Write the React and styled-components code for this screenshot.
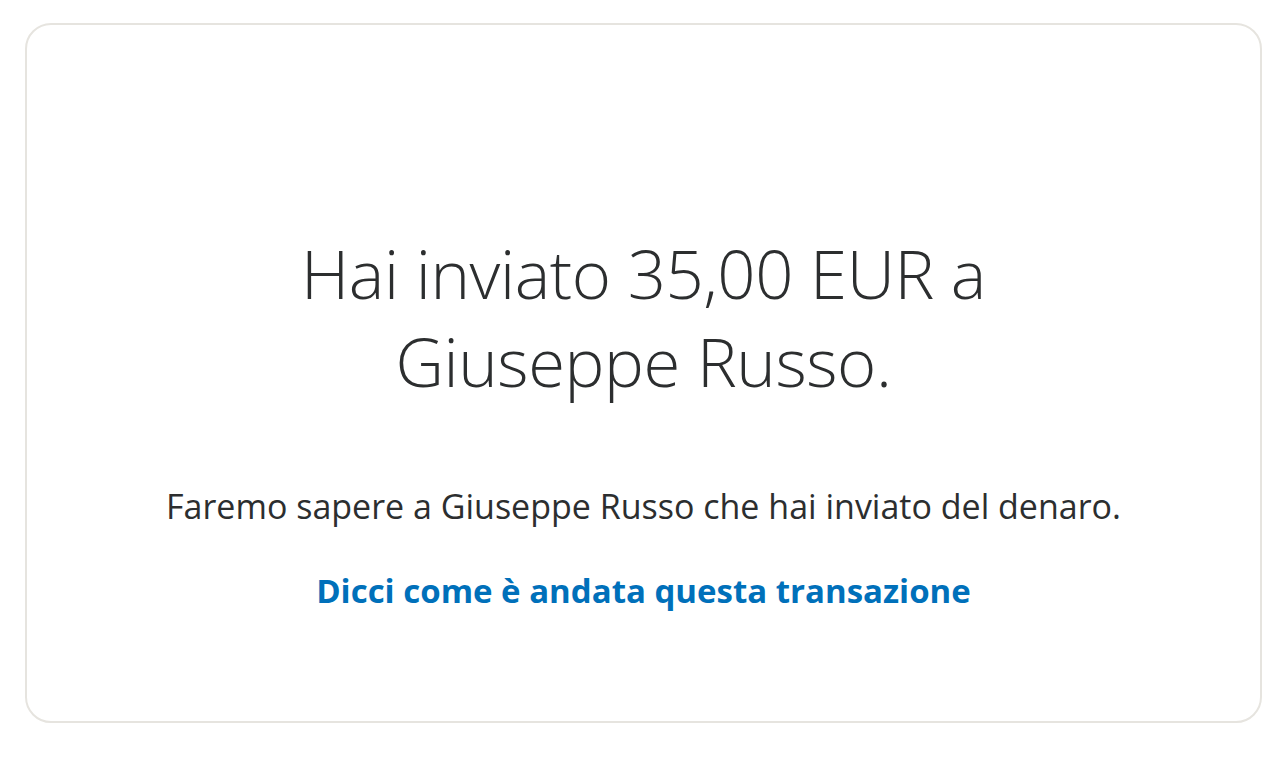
import React from 'react'
import styled, { createGlobalStyle } from 'styled-components'

const GlobalStyle = createGlobalStyle`
  html, body {
    margin: 0;
    padding: 0;
    background: #ffffff;
    font-family: 'Open Sans', 'Liberation Sans', sans-serif;
  }
`

const Page = styled.div`
  width: 1280px;
  height: 760px;
  box-sizing: border-box;
  padding: 23px 18px 37px 25px;
  display: flex;
`

const Card = styled.section`
  flex: 1;
  border: 2px solid #e6e4df;
  border-radius: 26px;
  display: flex;
  flex-direction: column;
  align-items: center;
  justify-content: center;
  text-align: center;
  padding-top: 96px;
`

const Title = styled.h1`
  margin: 0;
  font-weight: 300;
  font-size: 67px;
  line-height: 88px;
  color: #2c2e2f;
  letter-spacing: -0.4px;
`

const Note = styled.p`
  margin: 79px 0 0;
  font-size: 34px;
  line-height: 44px;
  color: #2c2e2f;
`

const FeedbackLink = styled.a`
  margin-top: 41px;
  font-size: 33px;
  line-height: 44px;
  font-weight: 700;
  color: #0070ba;
  text-decoration: none;
`

export default function App() {
  return (
    <>
      <GlobalStyle />
      <Page>
        <Card>
          <Title>
            Hai inviato 35,00 EUR a
            <br />
            Giuseppe Russo.
          </Title>
          <Note>Faremo sapere a Giuseppe Russo che hai inviato del denaro.</Note>
          <FeedbackLink href="#">Dicci come è andata questa transazione</FeedbackLink>
        </Card>
      </Page>
    </>
  )
}
